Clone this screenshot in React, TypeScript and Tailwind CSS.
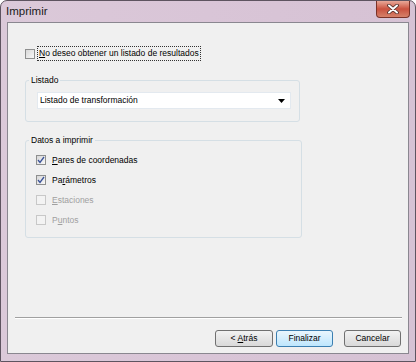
import React from "react";

const font = { fontFamily: '"Liberation Sans", Arial, sans-serif' };

function Check({ checked, disabled }: { checked?: boolean; disabled?: boolean }) {
  return (
    <div
      className={
        "w-[10px] h-[10px] border flex items-center justify-center shrink-0 " +
        (disabled
          ? "border-[#c8c8c8] bg-[#f3f3f3]"
          : "border-[#8e8f8f] bg-gradient-to-br from-[#d8d8d8] to-[#f8f8f8]")
      }
    >
      {checked && (
        <svg width="8" height="8" viewBox="0 0 8 8">
          <path d="M1 4 L3 6.5 L7 1" fill="none" stroke="#3a5298" strokeWidth="1.3" />
        </svg>
      )}
    </div>
  );
}

function Item({
  label,
  u,
  checked,
  disabled,
}: {
  label: string;
  u: number;
  checked?: boolean;
  disabled?: boolean;
}) {
  return (
    <div className="h-[20px] flex items-center">
      <Check checked={checked} disabled={disabled} />
      <span className={"ml-[6px] " + (disabled ? "text-[#a0a0a0]" : "text-black")}>
        {label.slice(0, u)}
        <span className="underline">{label[u]}</span>
        {label.slice(u + 1)}
      </span>
    </div>
  );
}

function Btn({ children, def, w }: { children: React.ReactNode; def?: boolean; w: string }) {
  return (
    <div
      className={
        "h-[17px] rounded-[3px] border flex items-center justify-center " +
        w +
        " " +
        (def
          ? "border-[#3c7fb1] bg-gradient-to-b from-[#eaf6fd] to-[#bee6fd]"
          : "border-[#707070] bg-gradient-to-b from-[#f2f2f2] to-[#d9d9d9]")
      }
    >
      {children}
    </div>
  );
}

export default function App() {
  return (
    <div
      className="w-[416px] h-[362px] rounded-t-[7px] border border-[#5e5460] flex flex-col bg-gradient-to-r from-[#dbc9d9] via-[#d9c5d7] to-[#d6c2d4] text-[8.5px] text-black"
      style={font}
    >
      <div className="h-[21px] flex items-start justify-between shrink-0">
        <div className="pl-[5px] pt-[4px] text-[11.5px] leading-[13px] text-[#1a1a1a]">Imprimir</div>
        <div className="mr-[5px] w-[34px] h-[17px] rounded-b-[4px] border border-t-0 border-[#7a3228] bg-gradient-to-b from-[#e8a899] via-[#c9513f] to-[#d5816a] flex items-center justify-center">
          <svg width="12" height="10" viewBox="0 0 12 10">
            <path d="M2 1.5 L10 8.5 M10 1.5 L2 8.5" stroke="#4a2a26" strokeWidth="3.6" strokeLinecap="round" />
            <path d="M2 1.5 L10 8.5 M10 1.5 L2 8.5" stroke="#ffffff" strokeWidth="2" strokeLinecap="round" />
          </svg>
        </div>
      </div>
      <div className="flex-1 mx-[6px] mb-[7px] border border-[#8a8790] bg-[#f0f0f0] flex flex-col">
        <div className="mt-[23px] ml-[17px] h-[15px] flex items-center">
          <Check />
          <div className="ml-[2px] h-[15px] border border-dotted border-[#333] flex items-center pl-[1px] pr-[1px]">
            <span className="underline">N</span>o deseo obtener un listado de resultados
          </div>
        </div>

        <fieldset className="mt-[14px] ml-[17px] w-[275px] border border-[#d5dfe5] rounded-[3px] pl-[11px] pr-[8px] pt-[6px] pb-[12px]">
          <legend className="-ml-[8px] px-[2px] leading-[11px]">Listado</legend>
          <div className="h-[17px] bg-white border border-[#e3e9ef] flex items-center justify-between pl-[2px] pr-[5px]">
            <span>Listado de transformación</span>
            <svg width="7" height="4" viewBox="0 0 7 4">
              <path d="M0 0 H7 L3.5 4 Z" fill="#000" />
            </svg>
          </div>
        </fieldset>

        <fieldset className="mt-[13px] ml-[17px] w-[277px] border border-[#d5dfe5] rounded-[3px] pl-[10px] pt-[4px] pb-[7px]">
          <legend className="-ml-[7px] px-[2px] leading-[11px]">Datos a imprimir</legend>
          <Item label="Pares de coordenadas" u={0} checked />
          <Item label="Parámetros" u={2} checked />
          <Item label="Estaciones" u={0} disabled />
          <Item label="Puntos" u={1} disabled />
        </fieldset>

        <div className="flex-1" />
        <div className="mx-[7px] mr-[6px] h-[2px] border-t border-[#a0a0a0] border-b border-b-white" />
        <div className="mt-[11px] mb-[6px] mr-[7px] flex justify-end">
          <Btn w="w-[58px]">
            &lt; <span className="underline ml-[2px]">A</span>trás
          </Btn>
          <div className="w-[3px]" />
          <Btn w="w-[57px]" def>
            Finalizar
          </Btn>
          <div className="w-[11px]" />
          <Btn w="w-[57px]">Cancelar</Btn>
        </div>
      </div>
    </div>
  );
}
